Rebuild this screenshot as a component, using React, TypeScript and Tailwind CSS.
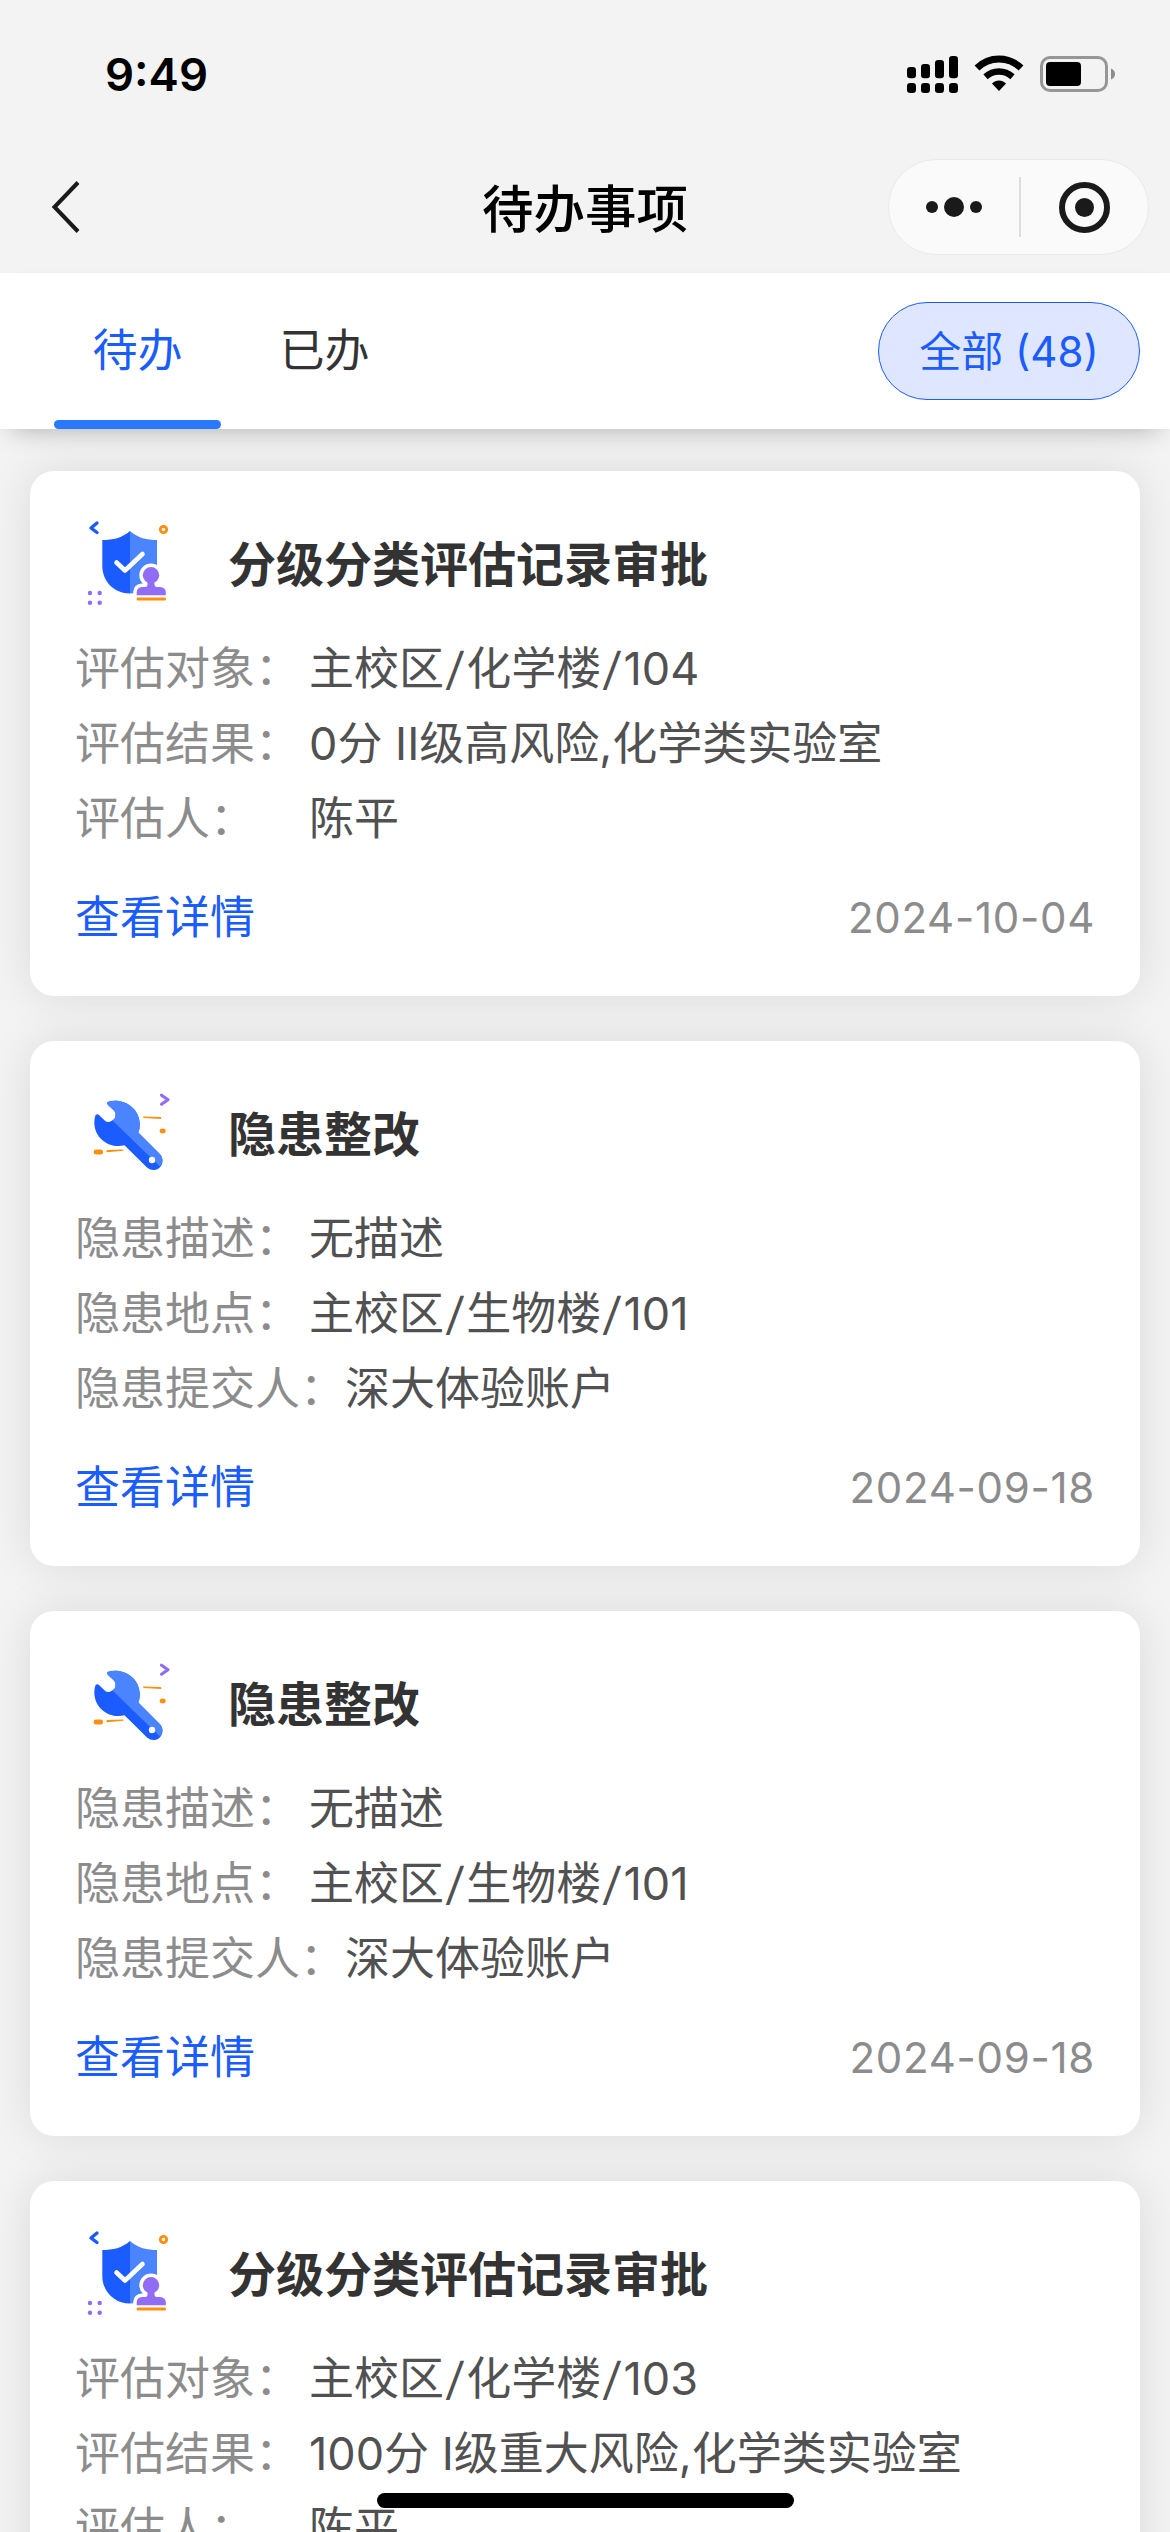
import React, { useState } from 'react';

interface Field {
  label: string;
  value: string;
}

interface TodoItem {
  id: number;
  type: 'approval' | 'repair';
  title: string;
  fields: Field[];
  date: string;
}

const repairFields: Field[] = [
  { label: '隐患描述：', value: '无描述' },
  { label: '隐患地点：', value: '主校区/生物楼/101' },
  { label: '隐患提交人：', value: '深大体验账户' },
];

const items: TodoItem[] = [
  {
    id: 1,
    type: 'approval',
    title: '分级分类评估记录审批',
    fields: [
      { label: '评估对象：', value: '主校区/化学楼/104' },
      { label: '评估结果：', value: '0分 II级高风险,化学类实验室' },
      { label: '评估人：', value: '陈平' },
    ],
    date: '2024-10-04',
  },
  { id: 2, type: 'repair', title: '隐患整改', fields: repairFields, date: '2024-09-18' },
  { id: 3, type: 'repair', title: '隐患整改', fields: repairFields, date: '2024-09-18' },
  {
    id: 4,
    type: 'approval',
    title: '分级分类评估记录审批',
    fields: [
      { label: '评估对象：', value: '主校区/化学楼/103' },
      { label: '评估结果：', value: '100分 I级重大风险,化学类实验室' },
      { label: '评估人：', value: '陈平' },
    ],
    date: '2024-10-04',
  },
];

function ApprovalIcon() {
  return (
    <svg width="120" height="120" viewBox="0 0 120 120" fill="none" className="shrink-0">
      <path d="M27 23L21 28L27 32.5" stroke="#1a5cff" strokeWidth="3.4" strokeLinecap="round" strokeLinejoin="round" />
      <circle cx="93.5" cy="29.5" r="3.2" stroke="#ff8f0f" strokeWidth="2.8" />
      <path d="M60 31C52 38 43 40 32.3 40V66C32.3 81 44 93.5 60 93.5Z" fill="#1a5cff" />
      <path d="M60 31C68 38 77 40 87 40V66C87 81 76 93.5 60 93.5Z" fill="#4a84ff" />
      <path d="M46.5 62.5L55 70.5L72.5 54" stroke="#fff" strokeWidth="4.6" strokeLinecap="round" strokeLinejoin="round" />
      {/* white outline keeps the stamp apart from the shield */}
      <g stroke="#fff" strokeWidth="7" strokeLinejoin="round">
        <circle cx="81" cy="75.3" r="8.2" />
        <path d="M77.5 80H84.5V85Q84.5 87 87 87H90Q95.5 87.5 95.8 92V95.2H66.7V92Q67 87.5 72 87H75Q77.5 87 77.5 85Z" />
      </g>
      <rect x="62" y="94" width="38" height="9" fill="#fff" />
      <circle cx="81" cy="75.3" r="8.2" fill="#916df5" />
      <path d="M77.5 80H84.5V85Q84.5 87 87 87H90Q95.5 87.5 95.8 92V95.2H66.7V92Q67 87.5 72 87H75Q77.5 87 77.5 85Z" fill="#916df5" />
      <rect x="66.7" y="97.5" width="29.2" height="3" rx="1" fill="#ff8f0f" />
      <g fill="#916df5">
        <circle cx="20" cy="93" r="2.2" />
        <circle cx="29.7" cy="93" r="2.2" />
        <circle cx="20" cy="102.7" r="2.2" />
        <circle cx="29.7" cy="102.7" r="2.2" />
      </g>
    </svg>
  );
}

function RepairIcon() {
  return (
    <svg width="120" height="120" viewBox="0 -5 120 120" fill="none" className="shrink-0">
      <path d="M91.5 20.2L98 24.7L91.5 29.2" stroke="#916df5" strokeWidth="3.2" strokeLinecap="round" strokeLinejoin="round" />
      <path
        d="M37.5 27C52 22 69.5 32 69.8 49Q69.8 54 68.3 57.5L90 79.2C95 84.5 92.5 94.7 83.5 95Q80 95 77 92.5L54.5 70.3C40 74 24.5 64 24.3 47.5Q24.2 43 25.6 40Q27 38.3 29 40L35.5 46.3Q38 47.5 41 46.3Q45.5 44 45.5 40.5Q46 37.5 44 35.5L38 30Q36.5 28.5 37.5 27Z"
        fill="#1a5cff"
      />
      <path
        d="M37.5 27C52 22 69.5 32 69.8 49Q69.8 54 68.3 57.5L90 79.2Q95 85 90 91.5L42.5 45.5Q45.5 44 45.5 40.5Q46 37.5 44 35.5L38 30Q36.5 28.5 37.5 27Z"
        fill="#4a84ff"
      />
      <circle cx="82" cy="85" r="3.2" fill="#fff" />
      <g fill="#ff8f0f">
        <path d="M73 41.5L90.5 42Q92.5 43 91 44L73.5 43Z" />
        <ellipse cx="92.7" cy="56" rx="3" ry="2.4" />
        <rect x="23.7" y="74.5" width="9.3" height="5" rx="2.3" />
        <path d="M37 75L53 74.4Q54.5 75 53 75.7L37 77.2Q35.5 76.5 37 75Z" />
      </g>
    </svg>
  );
}

function StatusBar() {
  return (
    <div className="flex h-[141px] shrink-0 items-start justify-between pl-[105px] pr-[54px] pt-[45px]">
      <span className="text-[45.5px] font-semibold leading-[60px] text-black">9:49</span>
      <svg width="212" height="44" viewBox="904 52 212 44" fill="none" className="mt-[7px]">
        <g fill="#000">
          <rect x="907" y="67" width="9" height="11.3" rx="3.2" />
          <rect x="921" y="64" width="9" height="14.3" rx="3.2" />
          <rect x="935" y="60" width="9" height="18.3" rx="3.2" />
          <rect x="949" y="56" width="9" height="22.3" rx="3.2" />
          <rect x="907" y="83" width="9" height="10" rx="3.2" />
          <rect x="921" y="83" width="9" height="10" rx="3.2" />
          <rect x="935" y="83" width="9" height="10" rx="3.2" />
          <rect x="949" y="83" width="9" height="10" rx="3.2" />
          <path d="M999 91L992 83.5C996 79.5 1002 79.5 1006 83.5Z" />
        </g>
        <path d="M977 68C989.5 56 1008.5 56 1021 68" stroke="#000" strokeWidth="7" />
        <path d="M985.5 76.8C993.5 69.8 1004.5 69.8 1012.5 76.8" stroke="#000" strokeWidth="6.5" />
        <rect x="1041.5" y="57.5" width="65" height="33" rx="8.5" stroke="#969696" strokeWidth="3" />
        <rect x="1046" y="62" width="35" height="24" rx="4" fill="#000" />
        <path d="M1111 68.5Q1115 70 1115 74Q1115 78 1111 79.5Z" fill="#8c8c8c" />
      </svg>
    </div>
  );
}

function NavBar() {
  return (
    <div className="grid h-[132px] shrink-0 grid-cols-3 items-center pl-[50px] pr-[21px]">
      <svg width="32" height="54" viewBox="0 0 32 54" fill="none">
        <path d="M28 2.5L4.5 27L28 51.5" stroke="#1a1a1a" strokeWidth="4" />
      </svg>
      <h1 className="whitespace-nowrap pr-[29px] pt-[3px] text-center text-[51.5px] font-medium leading-[60px] text-black">待办事项</h1>
      <div className="flex h-24 w-[261px] items-center justify-self-end rounded-full border border-[#e9e9e9] bg-[#fafafa]">
        <button className="flex w-[130px] items-center justify-center gap-[6px]">
          <span className="size-3 rounded-full bg-[#1a1a1a]" />
          <span className="size-5 rounded-full bg-[#1a1a1a]" />
          <span className="size-3 rounded-full bg-[#1a1a1a]" />
        </button>
        <span className="h-[60px] w-[2px] bg-[#dedede]" />
        <button className="flex flex-1 items-center justify-center">
          <span className="flex size-[51px] items-center justify-center rounded-full border-[6px] border-[#1a1a1a]">
            <span className="size-[19px] rounded-full bg-[#1a1a1a]" />
          </span>
        </button>
      </div>
    </div>
  );
}

// location paths get a little air around each slash
function FieldValue({ value }: { value: string }) {
  const parts = value.split('/');
  return (
    <span className="text-[#515151]">
      {parts.map((part, i) => (
        <React.Fragment key={i}>
          {i > 0 && <span className="inline-block -skew-x-6 px-[3px]">/</span>}
          {part}
        </React.Fragment>
      ))}
    </span>
  );
}

function TodoCard({ item }: { item: TodoItem }) {
  return (
    <div className="h-[525px] shrink-0 rounded-3xl bg-white pr-[45px] shadow-[0_0_45px_rgba(0,0,0,0.1)]">
      <div className="flex h-[160px] items-start pl-10 pt-[29px]">
        {item.type === 'approval' ? <ApprovalIcon /> : <RepairIcon />}
        <h2 className="ml-[38px] pt-[5px] text-[48px] font-bold leading-[120px] text-[#333]">{item.title}</h2>
      </div>
      <div className="pl-[45px] font-[380]">
        {item.fields.map((field) => (
          <div key={field.label} className="flex h-[75px] items-center whitespace-nowrap text-[45px]">
            <span className="min-w-[234px] text-[#8c8c8c]">{field.label}</span>
            <FieldValue value={field.value} />
          </div>
        ))}
        <div className="mt-6 flex h-[75px] items-center justify-between">
          <a className="text-[45px] text-[#1a5cff]">查看详情</a>
          <span className="text-[42px] tracking-[0.7px] text-[#8c8c8c]">{item.date}</span>
        </div>
      </div>
    </div>
  );
}

export default function App() {
  const [tab, setTab] = useState('待办');

  return (
    <div className="relative flex h-[2532px] w-[1170px] flex-col overflow-hidden bg-[#f3f3f3] font-['Inter','Noto_Sans_CJK_SC',sans-serif]">
      <StatusBar />
      <NavBar />
      <div className="z-10 flex h-[156px] shrink-0 items-center justify-between bg-white pl-11 pr-[30px] shadow-[0_12px_24px_-12px_rgba(0,0,0,0.3)]">
        <div className="flex h-full">
          {['待办', '已办'].map((name) => (
            <button
              key={name}
              onClick={() => setTab(name)}
              className={`flex w-[187px] flex-col items-center text-[45px] font-[380] ${tab === name ? 'text-[#1a5cff]' : 'text-[#333]'}`}
            >
              <span className="h-[147px] leading-[155px]">{name}</span>
              {tab === name && <span className="h-[9px] w-[167px] rounded-full bg-[#2979ff]" />}
            </button>
          ))}
        </div>
        <button className="h-[98px] w-[262px] rounded-full border border-[#1a5cff] bg-[#dfe6ff] text-[42px] font-[380] text-[#1a5cff]">
          全部 (48)
        </button>
      </div>
      <div className="flex flex-col gap-[45px] px-[30px] pt-[42px]">
        {items.map((item) => (
          <TodoCard key={item.id} item={item} />
        ))}
      </div>
      <div className="absolute bottom-6 left-[377px] z-20 h-[15px] w-[417px] rounded-full bg-black" />
    </div>
  );
}
